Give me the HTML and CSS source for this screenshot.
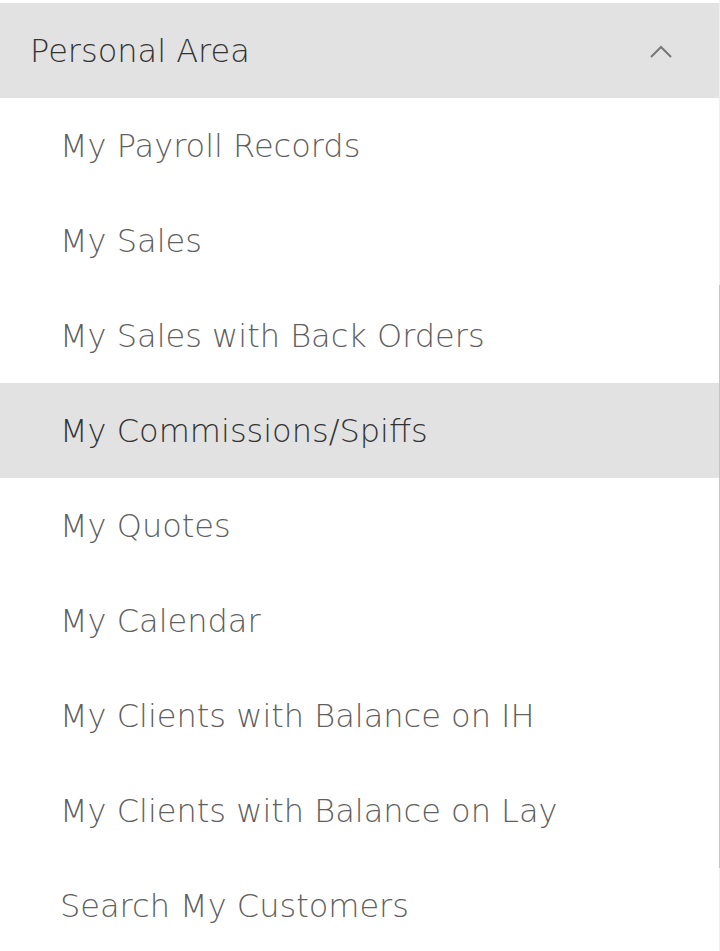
FILE: index.html
```html
<!DOCTYPE html>
<html lang="en">
<head>
    <meta charset="UTF-8">
    <meta name="viewport" content="width=device-width, initial-scale=1.0">
    <title>Personal Area</title>
    <link rel="stylesheet" href="styles.css">
</head>
<body>
    <div class="menu">
        <!-- Section header -->
        <div class="menu-header">
            <span>Personal Area</span>
            <svg class="chevron" width="24" height="14" viewBox="0 0 24 14">
                <path d="M2 12 L12 2 L22 12" fill="none" stroke="#777" stroke-width="2"/>
            </svg>
        </div>

        <!-- Section items -->
        <ul class="menu-list">
            <li><a href="#">My Payroll Records</a></li>
            <li><a href="#">My Sales</a></li>
            <li><a href="#">My Sales with Back Orders</a></li>
            <li class="active"><a href="#">My Commissions/Spiffs</a></li>
            <li><a href="#">My Quotes</a></li>
            <li><a href="#">My Calendar</a></li>
            <li><a href="#">My Clients with Balance on IH</a></li>
            <li><a href="#">My Clients with Balance on Lay</a></li>
            <li><a href="#">Search My Customers</a></li>
        </ul>
    </div>

    <div class="scrollbar"><div class="scrollbar-thumb"></div></div>
</body>
</html>
```

FILE: styles.css
```css
body {
    font-family: "DejaVu Sans", sans-serif;
    font-weight: 200;
    margin: 0;
    padding-top: 3px;
    background-color: #fff;
    overflow: hidden;
}
.menu {
    width: 719px;
}
.menu-header {
    display: flex;
    align-items: center;
    justify-content: space-between;
    height: 95px;
    padding: 0 46px 0 30px;
    background-color: #e2e2e2;
    color: #333;
    font-size: 32px;
}
.chevron {
    display: block;
    margin-top: 2px;
}
.menu-list {
    list-style: none;
    margin: 0;
    padding: 0;
}
.menu-list li a {
    display: flex;
    align-items: center;
    height: 95px;
    padding-left: 60px;
    font-size: 32px;
    color: #5f5f5f;
    text-decoration: none;
}
.menu-list li.active a {
    background-color: #e2e2e2;
    color: #333;
}
.scrollbar {
    position: absolute;
    top: 0;
    right: 0;
    width: 1px;
    height: 951px;
    background-color: #f0f0f0;
}
.scrollbar-thumb {
    margin-top: 285px;
    height: 583px;
    background-color: #c6c6c6;
}
```
